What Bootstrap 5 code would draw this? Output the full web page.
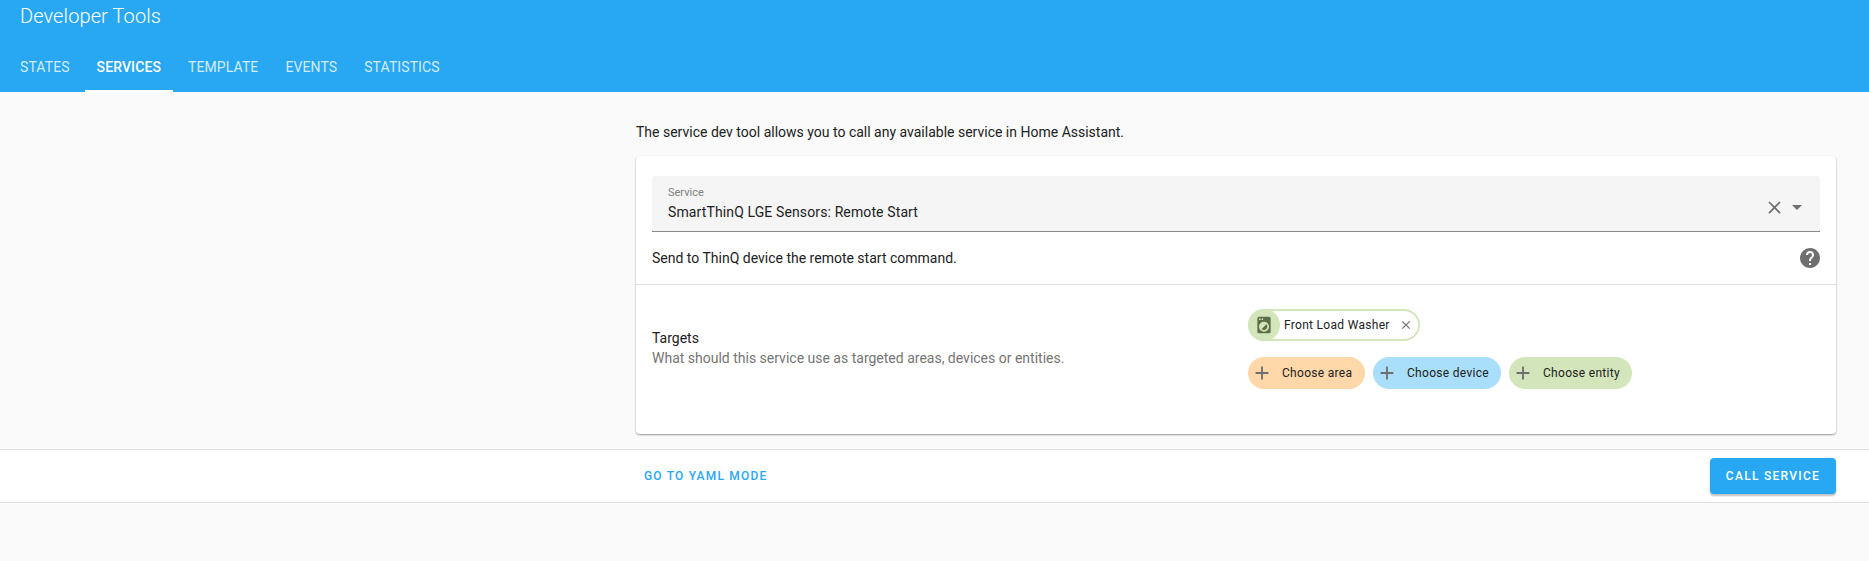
<!DOCTYPE html>
<html lang="en">
<head>
<meta charset="utf-8">
<title>Developer Tools</title>
<link rel="stylesheet" href="https://cdn.jsdelivr.net/npm/bootstrap@5.3.0/dist/css/bootstrap.min.css">
<style>
html,body{height:561px;overflow:hidden}
body{background:#fafafa;color:#212121;font-family:Roboto,"Liberation Sans",sans-serif;font-size:14px;line-height:20px}
.ha-head{background:#28a7f3;height:92px;color:#fff}
.ha-title{font-size:20px;line-height:32px;padding-left:20px;height:44px;font-weight:300;letter-spacing:.1px}
.ha-tabs{padding-left:8px;height:48px}
.ha-tab{padding:0 12px 0;height:48px;line-height:46px;font-size:14px;font-weight:400;letter-spacing:.1px;color:rgba(255,255,255,.8);text-transform:uppercase;margin-right:3px;border-bottom:2px solid transparent;text-decoration:none}
.ha-tab.on{color:#fff;border-bottom-color:#fff;font-weight:500}
.ha-main{padding:0 33px 0 636px}
.ha-intro{height:64px;padding-top:30px;line-height:20px}
.ha-panel{height:278px;border-radius:4px;background:#fff;box-shadow:0 1px 2px rgba(0,0,0,.4)}
.ha-field{margin:20px 16px 0;height:56px;background:#f5f5f5;border-radius:4px 4px 0 0;border-bottom:1px solid #8a8a8a;padding:10px 11px 0 16px}
.ha-lab{font-size:11px;line-height:14px;color:#808080}
.ha-val{font-size:14px;line-height:20px;margin-top:2px;letter-spacing:.12px}
.ha-desc{height:53px;padding:0 16px;border-bottom:1px solid #e0e0e0}
.ha-help{margin-right:-2px}
.ha-ctl{margin-bottom:3px;flex:none}
.ha-targets{padding:24px 16px 0}
.ha-tgt-left{width:596px;padding-top:19px}
.ha-tgt-b{color:#757575}
.ha-chip{height:32px;border-radius:16px;padding:0;font-size:12px;letter-spacing:.3px;color:#212121}
.ha-sel{border:2px solid #d3e6bb;width:172px;background:#fff}
.ha-ic{width:32px;height:32px;border-radius:50%;background:#d3e6bb;margin:-2px 0 -2px -2px;flex:none}
.ha-sel .ha-name{padding-left:4px;flex:1}
.ha-x{margin-right:5px;flex:none}
.ha-add{border:0}
.ha-orange{background:#ffd7a8;width:117px}
.ha-blue{background:#aadffb;width:128px}
.ha-green{background:#d3e6bb;width:123px}
.ha-add svg{margin:0 9px 0 3px;flex:none}
.ha-foot{margin-top:15px;height:54px;background:#fff;border-top:1px solid #e0e0e0;border-bottom:1px solid #e0e0e0;padding:0 33px 0 644px}
.ha-link{color:#28a7f3;font-size:12px;font-weight:500;letter-spacing:1.2px;text-transform:uppercase;text-decoration:none}
.ha-call{background:#28a7f3;color:#fff;border:0;border-radius:4px;width:126px;height:36px;padding:0;font-size:12px;font-weight:500;letter-spacing:1.28px;text-transform:uppercase;box-shadow:0 2px 2px rgba(0,0,0,.25)}
.ha-mute{fill:#6f6f6f}
</style>
</head>
<body>
<header class="ha-head">
  <div class="ha-title">Developer Tools</div>
  <nav class="ha-tabs d-flex">
    <a class="ha-tab" href="#">States</a>
    <a class="ha-tab on" href="#">Services</a>
    <a class="ha-tab" href="#">Template</a>
    <a class="ha-tab" href="#">Events</a>
    <a class="ha-tab" href="#">Statistics</a>
  </nav>
</header>
<main class="ha-main">
  <div class="ha-intro">The service dev tool allows you to call any available service in Home Assistant.</div>
  <section class="ha-panel d-flex flex-column">
    <div class="ha-field d-flex align-items-center">
      <div class="flex-grow-1 align-self-start">
        <div class="ha-lab">Service</div>
        <div class="ha-val">SmartThinQ LGE Sensors: Remote Start</div>
      </div>
      <svg class="ha-ctl ha-mute" width="21" height="21" viewBox="0 0 24 24"><path d="M19,6.41L17.59,5L12,10.59L6.41,5L5,6.41L10.59,12L5,17.59L6.41,19L12,13.41L17.59,19L19,17.59L13.41,12L19,6.41Z"/></svg>
      <svg class="ha-ctl ha-mute" width="24" height="24" viewBox="0 0 24 24"><path d="M7,10L12,15L17,10H7Z"/></svg>
    </div>
    <div class="ha-desc d-flex align-items-center justify-content-between">
      <span>Send to ThinQ device the remote start command.</span>
      <svg class="ha-help ha-mute" width="24" height="24" viewBox="0 0 24 24"><path d="M15.07,11.25L14.17,12.17C13.45,12.89 13,13.5 13,15H11V14.5C11,13.39 11.45,12.39 12.17,11.67L13.41,10.41C13.78,10.05 14,9.55 14,9C14,7.89 13.1,7 12,7A2,2 0 0,0 10,9H8A4,4 0 0,1 12,5A4,4 0 0,1 16,9C16,9.88 15.64,10.67 15.07,11.25M13,19H11V17H13M12,2A10,10 0 0,0 2,12C2,17.53 6.47,22 12,22C17.53,22 22,17.53 22,12C22,6.47 17.5,2 12,2Z"/></svg>
    </div>
    <div class="ha-targets d-flex">
      <div class="ha-tgt-left">
        <div class="ha-tgt-a">Targets</div>
        <div class="ha-tgt-b">What should this service use as targeted areas, devices or entities.</div>
      </div>
      <div class="d-flex flex-column gap-3">
        <div class="ha-chip ha-sel d-flex align-items-center">
          <span class="ha-ic d-flex align-items-center justify-content-center">
            <svg width="20" height="20" viewBox="0 0 24 24" fill="#5d6f48"><path d="M14.83,11.17C16.39,12.73 16.39,15.27 14.83,16.83C13.27,18.39 10.73,18.39 9.17,16.83L14.83,11.17M6,2H18A2,2 0 0,1 20,4V20A2,2 0 0,1 18,22H6A2,2 0 0,1 4,20V4A2,2 0 0,1 6,2M7,4A1,1 0 0,0 6,5A1,1 0 0,0 7,6A1,1 0 0,0 8,5A1,1 0 0,0 7,4M10,4A1,1 0 0,0 9,5A1,1 0 0,0 10,6A1,1 0 0,0 11,5A1,1 0 0,0 10,4M12,8A6,6 0 0,0 6,14A6,6 0 0,0 12,20A6,6 0 0,0 18,14A6,6 0 0,0 12,8Z"/></svg>
          </span>
          <span class="ha-name">Front Load Washer</span>
          <svg class="ha-x ha-mute" width="14" height="14" viewBox="0 0 24 24"><path d="M19,6.41L17.59,5L12,10.59L6.41,5L5,6.41L10.59,12L5,17.59L6.41,19L12,13.41L17.59,19L19,17.59L13.41,12L19,6.41Z"/></svg>
        </div>
        <div class="d-flex gap-2">
          <div class="ha-chip ha-add ha-orange d-flex align-items-center"><svg class="ha-mute" width="22" height="22" viewBox="0 0 24 24"><path d="M19,13H13V19H11V13H5V11H11V5H13V11H19V13Z"/></svg>Choose area</div>
          <div class="ha-chip ha-add ha-blue d-flex align-items-center"><svg class="ha-mute" width="22" height="22" viewBox="0 0 24 24"><path d="M19,13H13V19H11V13H5V11H11V5H13V11H19V13Z"/></svg>Choose device</div>
          <div class="ha-chip ha-add ha-green d-flex align-items-center"><svg class="ha-mute" width="22" height="22" viewBox="0 0 24 24"><path d="M19,13H13V19H11V13H5V11H11V5H13V11H19V13Z"/></svg>Choose entity</div>
        </div>
      </div>
    </div>
  </section>
</main>
<footer class="ha-foot d-flex align-items-center justify-content-between">
  <a class="ha-link" href="#">Go to YAML mode</a>
  <button class="ha-call" type="button">Call service</button>
</footer>
</body>
</html>
